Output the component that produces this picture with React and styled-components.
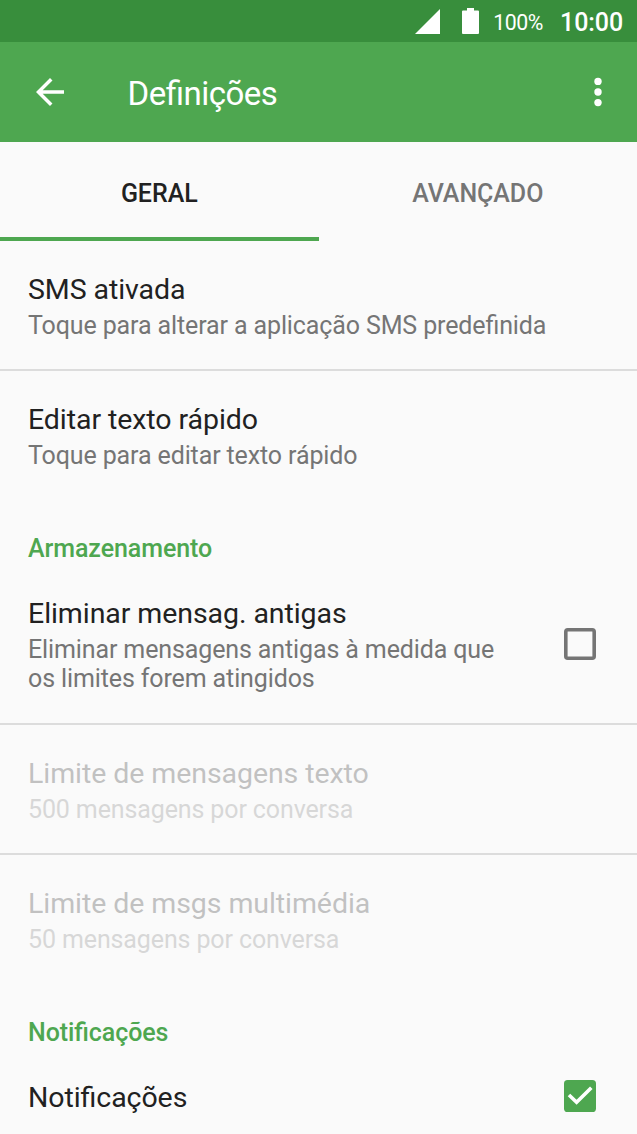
import React from "react";
import styled, { createGlobalStyle } from "styled-components";

const Global = createGlobalStyle`
  * { box-sizing: border-box; }
  body { margin: 0; background: #fafafa; font-family: Roboto, "Noto Sans", sans-serif; font-feature-settings: "liga" 1; }
`;
const Screen = styled.main`
  height: 1134px; overflow: hidden; display: flex; flex-direction: column; background: #fafafa;
`;
const StatusBar = styled.div`
  flex: none; height: 42px; background: #388e3c; color: #fff; display: flex; align-items: center;
  justify-content: flex-end; padding: 2px 14px 0 0;
`;
const SignalIcon = styled.svg`width: 25px; height: 25px; margin: 0 22px 1px 0;`;
const BatteryIcon = styled.svg`width: 17px; height: 26px; margin: 0 14px 2px 0;`;
const Percent = styled.span`font-size: 21.3px; letter-spacing: -0.4px; margin-right: 17px;`;
const Clock = styled.span`font-size: 25px; letter-spacing: -0.1px; font-weight: 500; margin-top: 1px;`;
const AppBar = styled.header`
  flex: none; height: 100px; background: #4ea750; color: #fff; display: flex; align-items: center;
  padding: 0 27px 0 28.6px;
`;
const BarIcon = styled.svg`width: ${p => p.$w}px; height: 42px; flex: none;`;
const Title = styled.h1`
  margin: 3px auto 0 57px; font-size: 33px; letter-spacing: -0.52px; font-weight: 400; line-height: 40px;
`;
const Tabs = styled.nav`flex: none; height: 99px; display: grid; grid-template-columns: 1fr 1fr;`;
const Tab = styled.div`
  display: flex; align-items: center; justify-content: center; padding-top: ${p => p.$active ? 8 : 4}px;
  font-size: 25px; letter-spacing: -0.05px; font-weight: 500; color: ${p => p.$active ? "#212121" : "#757575"};
  border-bottom: ${p => p.$active ? "4px solid #4ea750" : "0"};
`;
const Row = styled.section`
  flex: none; height: ${p => p.$h}px; padding: ${p => p.$top || 30}px 41px 0 28px; display: flex;
  justify-content: space-between; opacity: ${p => p.$disabled ? 0.26 : 1};
`;
const Divider = styled.div`flex: none; height: 2px; background: #dcdcdc;`;
const RowTitle = styled.div`font-size: 28.5px; letter-spacing: -0.07px; line-height: 38px; color: #212121;`;
const Summary = styled.div`
  font-size: 25px; letter-spacing: -0.12px; line-height: 29.4px; color: #757575; margin-top: 2px; white-space: pre-line;
`;
const Heading = styled.h2`
  flex: none; margin: 0; height: ${p => p.$h}px; padding: 1px 28px 0; font-size: 25px; letter-spacing: -0.08px; font-weight: 500;
  line-height: 32px; color: #4ea750;
`;
const CheckIcon = styled.svg`width: 32px; height: 32px; flex: none; margin-top: ${p => p.$top}px;`;

function Setting({ title, summary, children, ...rest }) {
  return (
    <Row {...rest}>
      <div>
        <RowTitle>{title}</RowTitle>
        {summary && <Summary>{summary}</Summary>}
      </div>
      {children}
    </Row>
  );
}

export default function App() {
  return (
    <Screen>
      <Global />
      <StatusBar>
        <SignalIcon viewBox="0 0 25 25"><path d="M25 0V25H0Z" fill="#fff" /></SignalIcon>
        <BatteryIcon viewBox="0 0 17 26"><path d="M5 0H12V2.6H16Q17 2.6 17 3.6V25Q17 26 16 26H1Q0 26 0 25V3.6Q0 2.6 1 2.6H5Z" fill="#fff" /></BatteryIcon>
        <Percent>100%</Percent>
        <Clock>10:00</Clock>
      </StatusBar>
      <AppBar>
        <BarIcon $w={42} viewBox="0 0 24 24"><path fill="#fff" d="M20 11H7.83l5.59-5.59L12 4l-8 8 8 8 1.41-1.41L7.83 13H20v-2z" /></BarIcon>
        <Title>Definições</Title>
        <BarIcon $w={24} viewBox="0 0 24 42" fill="#fff"><circle cx="12" cy="10.4" r="3.7" /><circle cx="12" cy="21" r="3.7" /><circle cx="12" cy="31.6" r="3.7" /></BarIcon>
      </AppBar>
      <Tabs><Tab $active>GERAL</Tab><Tab>AVANÇADO</Tab></Tabs>
      <Setting $h={128} title="SMS ativada" summary="Toque para alterar a aplicação SMS predefinida" />
      <Divider />
      <Setting $h={161} title="Editar texto rápido" summary="Toque para editar texto rápido" />
      <Heading $h={62}>Armazenamento</Heading>
      <Setting $h={129} $top={1} title="Eliminar mensag. antigas" summary={"Eliminar mensagens antigas à medida que\nos limites forem atingidos"}>
        <CheckIcon $top={33} viewBox="0 0 32 32"><rect x="1.8" y="1.8" width="28.4" height="28.4" rx="2" fill="none" stroke="#757575" strokeWidth="3.6" /></CheckIcon>
      </Setting>
      <Divider />
      <Setting $h={128} $disabled title="Limite de mensagens texto" summary="500 mensagens por conversa" />
      <Divider />
      <Setting $h={161} $disabled title="Limite de msgs multimédia" summary="50 mensagens por conversa" />
      <Heading $h={62}>Notificações</Heading>
      <Setting $h={60} $top={1} title="Notificações">
        <CheckIcon $top={1} viewBox="0 0 32 32"><rect width="32" height="32" rx="3.6" fill="#4ea750" /><path d="M5 15L12.6 22.3L27.3 7.7" fill="none" stroke="#fff" strokeWidth="3.6" /></CheckIcon>
      </Setting>
    </Screen>
  );
}
